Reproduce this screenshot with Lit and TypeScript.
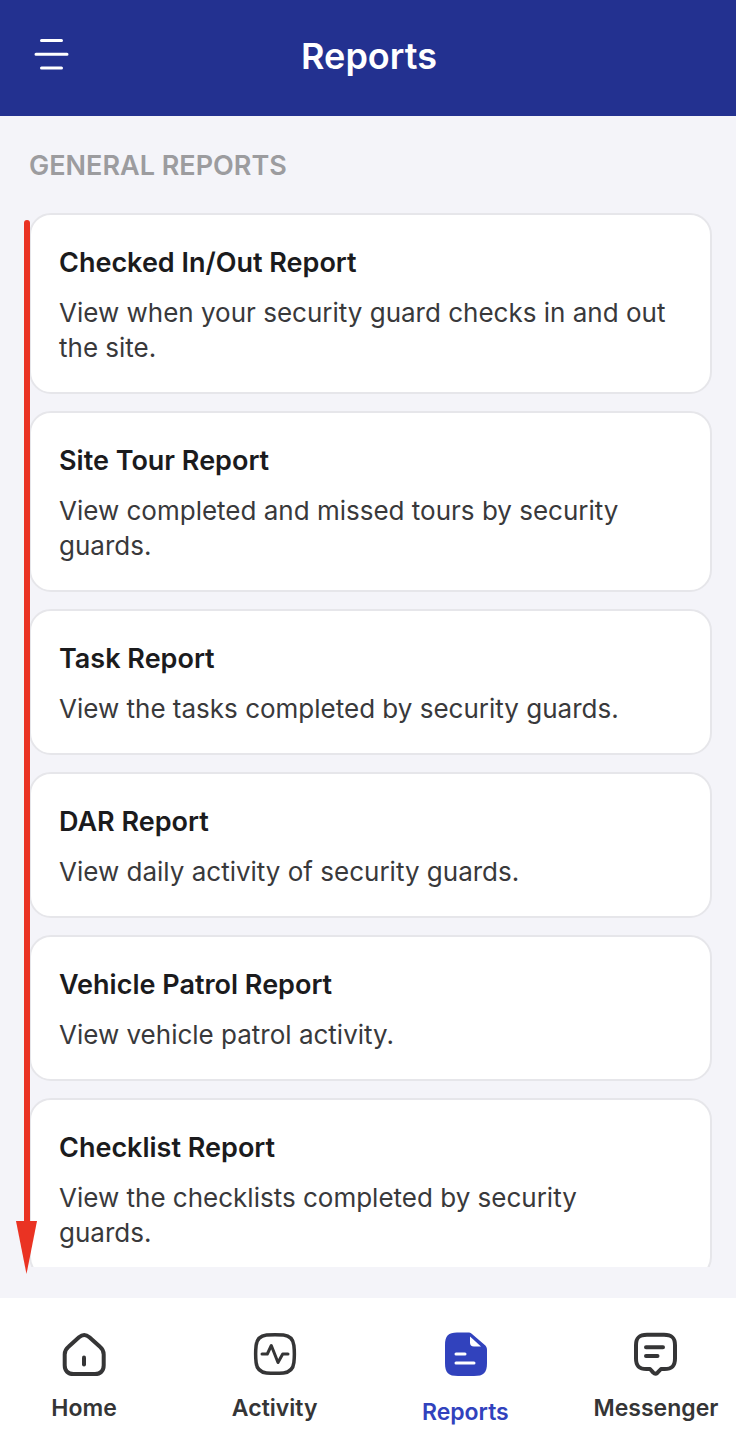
import { LitElement, html, css, svg } from "lit";
import { customElement, state } from "lit/decorators.js";
import { classMap } from "lit/directives/class-map.js";

interface Report {
  title: string;
  description: string;
}

const REPORTS: Report[] = [
  { title: "Checked In/Out Report", description: "View when your security guard checks in and out the site." },
  { title: "Site Tour Report", description: "View completed and missed tours by security guards." },
  { title: "Task Report", description: "View the tasks completed by security guards." },
  { title: "DAR Report", description: "View daily activity of security guards." },
  { title: "Vehicle Patrol Report", description: "View vehicle patrol activity." },
  { title: "Checklist Report", description: "View the checklists completed by security guards." },
];

const TABS = [
  {
    label: "Home",
    icon: svg`
      <path class="line" stroke-width="4" d="M2.700 22.500c0-3.200 1.200-5.600 3.800-7.700L17 5.200c3.200-2.700 7.200-2.700 10.400 0L38 14.800c2.500 2.100 3.700 4.500 3.700 7.700v10.800c0 5.500-3.200 8.700-8.700 8.700H11.400c-5.500 0-8.700-3.200-8.700-8.700z"/>
      <path class="line" stroke-width="4" d="M22 25.500v7"/>`,
  },
  {
    label: "Activity",
    icon: svg`
      <path class="line" stroke-width="3.500" d="M13.500 3.100C19 2.500 25 2.500 30.500 3.100c6.500.7 9.700 3.900 10.400 10.400.6 5.500.6 11.500 0 17-.7 6.500-3.900 9.700-10.400 10.400-5.500.6-11.500.6-17 0C7 40.200 3.800 37 3.100 30.500c-.6-5.500-.6-11.500 0-17C3.800 7 7 3.800 13.500 3.100z"/>
      <path class="line" stroke-width="3" d="M9 22h5.300l4-8.500 6.700 17 4.700-8.500H35"/>`,
  },
  {
    label: "Reports",
    icon: svg`
      <path fill="currentColor" d="M14 .5h11c1.600 0 2.700.4 4 1.500l12.500 10.700c1.700 1.400 2.500 2.900 2.500 5V31c0 10-3.500 13-13 13H15C5.500 44 2 41 2 31V13.500C2 3.500 5.500.5 14 .5z"/>
      <path fill="#fff" d="M27 4.500l11 10h-7c-2.800 0-4-1.200-4-4z"/>
      <path fill="none" stroke="#fff" stroke-width="3" stroke-linecap="round" d="M13 22h9M13 31h18"/>`,
  },
  {
    label: "Messenger",
    icon: svg`
      <path class="line" stroke-width="4" d="M13 2.700h17c8 0 11 3 11 10.500v13.300c0 7.500-3 10.500-10.500 10.500H27l-3.500 3.700c-1.500 1.400-2.800 1.400-4.200 0L16 37h-3.500C5 37 2 34 2 26.500V13.200C2 5.700 5 2.700 13 2.700z"/>
      <path class="line" stroke-width="4" d="M12 15.300h17M12 24h11.500"/>`,
  },
];

@customElement("report-card")
class ReportCard extends LitElement {
  static properties = { heading: {}, description: {} };
  declare heading: string;
  declare description: string;

  static styles = css`
    :host {
      display: block;
      flex: none;
    }
    .card {
      box-sizing: border-box;
      display: flex;
      flex-direction: column;
      gap: 13px;
      padding: 29px 40px 27px 28px;
      border: 2px solid #e6e6ea;
      border-radius: 22px;
      background: #fff;
      color: inherit;
      text-decoration: none;
    }
    .title {
      margin: 0;
      font-size: 27px;
      line-height: 38px;
      font-weight: 600;
      color: #1b1b1d;
    }
    .description {
      margin: 0;
      font-size: 26px;
      line-height: 35px;
      color: #39393b;
    }
  `;

  render() {
    return html`<a class="card" href="#">
      <h3 class="title">${this.heading}</h3>
      <p class="description">${this.description}</p>
    </a>`;
  }
}

@customElement("app-root")
class AppRoot extends LitElement {
  @state() private current = "Reports";

  static styles = css`
    :host {
      display: flex;
      flex-direction: column;
      height: 100vh;
      background: #f4f4f9;
      font-family: Inter, "Open Sans", sans-serif;
    }
    button {
      padding: 0;
      border: 0;
      background: none;
      font: inherit;
      cursor: pointer;
    }
    .line {
      fill: none;
      stroke: currentColor;
      stroke-linecap: round;
      stroke-linejoin: round;
    }
    .bar {
      flex: none;
      display: grid;
      grid-template-columns: 36px 1fr 36px;
      align-items: center;
      padding: 32px 32px 36px 34px;
      background: #233190;
      color: #fff;
    }
    .menu {
      display: flex;
      color: inherit;
    }
    .page-title {
      margin: 0;
      text-align: center;
      font-size: 36px;
      line-height: 48px;
      font-weight: 600;
    }
    .content {
      position: relative;
      flex: 1;
      min-height: 0;
      display: flex;
      flex-direction: column;
      padding: 32px 24px 31px 29px;
    }
    .section-title {
      flex: none;
      margin: 0 0 29px;
      font-size: 27px;
      line-height: 36px;
      font-weight: 600;
      color: #9c9c9f;
    }
    .list {
      flex: 1;
      min-height: 0;
      display: flex;
      flex-direction: column;
      gap: 17px;
      overflow-y: auto;
      scrollbar-width: none;
    }
    .arrow {
      position: absolute;
      top: 104px;
      bottom: 24px;
      left: 16px;
      width: 21px;
      display: flex;
      flex-direction: column;
      align-items: center;
      color: #ea3323;
      pointer-events: none;
    }
    .shaft {
      flex: 1;
      width: 6px;
      border-radius: 3px 3px 0 0;
      background: currentColor;
    }
    .head {
      display: block;
    }
    .tabs {
      flex: none;
      display: flex;
      justify-content: space-between;
      padding: 34px 17px 23px 21px;
      background: #fff;
    }
    .tab {
      width: 126px;
      display: flex;
      flex-direction: column;
      align-items: center;
      gap: 17px;
      color: #353536;
      font-size: 23px;
      line-height: 30px;
      font-weight: 600;
    }
    .tab.active {
      gap: 21px;
      color: #3142bd;
    }
  `;

  render() {
    return html`
      <header class="bar">
        <button class="menu" aria-label="Open menu">
          <svg width="36" height="36" viewBox="0 0 36 36">
            <path class="line" stroke-width="3" d="M7.500 2.500h20M2 16.200h31M7.500 30h20" />
          </svg>
        </button>
        <h1 class="page-title">Reports</h1>
      </header>
      <main class="content">
        <h2 class="section-title">GENERAL REPORTS</h2>
        <div class="list">
          ${REPORTS.map((r) => html`<report-card .heading=${r.title} .description=${r.description}></report-card>`)}
        </div>
        <div class="arrow" aria-hidden="true">
          <div class="shaft"></div>
          <svg class="head" width="21" height="53" viewBox="0 0 21 53">
            <path fill="currentColor" d="M0 0h21L10.500 53z" />
          </svg>
        </div>
      </main>
      <nav class="tabs">
        ${TABS.map(
          (t) => html`<button
            class=${classMap({ tab: true, active: t.label === this.current })}
            @click=${() => (this.current = t.label)}
          >
            <svg width="44" height="44" viewBox="0 0 44 44" aria-hidden="true">${t.icon}</svg>
            <span>${t.label}</span>
          </button>`
        )}
      </nav>
    `;
  }
}
